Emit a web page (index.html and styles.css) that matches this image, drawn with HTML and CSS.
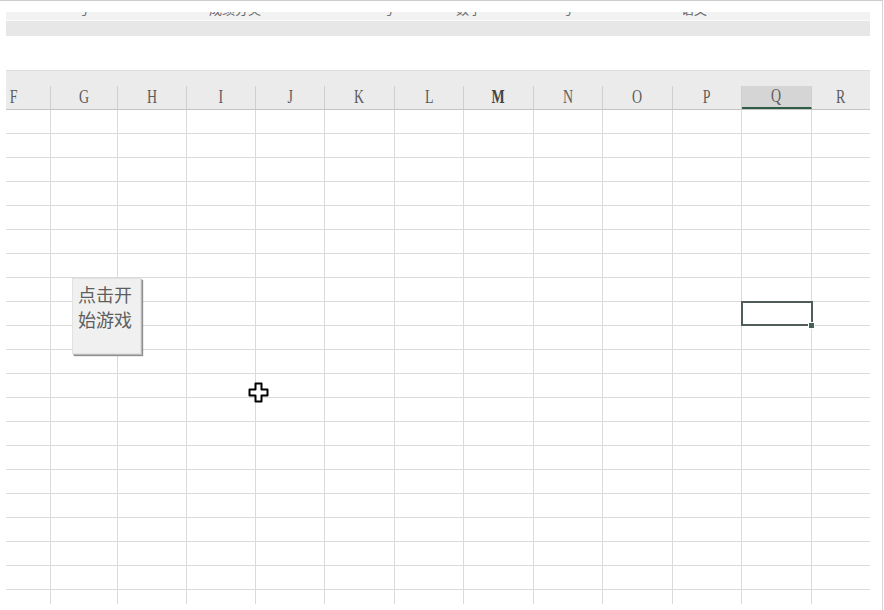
FILE: index.html
```html
<!DOCTYPE html>
<html lang="zh">
<head>
<meta charset="utf-8">
<title>Sheet</title>
<link rel="stylesheet" href="styles.css">
</head>
<body>
<div class="frame">
  <div class="topband">
    <div class="cutrow">
      <span class="cut c1">号</span>
      <span class="cut c2">成绩分类</span>
      <span class="cut c3">号</span>
      <span class="cut c4">数学</span>
      <span class="cut c5">号</span>
      <span class="cut c6">语文</span>
    </div>
    <div class="toolbar"></div>
  </div>
  <div class="sheet">
    <div class="colhead">
      <div class="hrow">
        <div class="hc f"><span>F</span></div><div class="hc"><span>G</span></div><div class="hc"><span>H</span></div><div class="hc"><span>I</span></div><div class="hc"><span>J</span></div><div class="hc"><span>K</span></div><div class="hc"><span>L</span></div><div class="hc"><span class="b">M</span></div><div class="hc"><span>N</span></div><div class="hc"><span>O</span></div><div class="hc"><span>P</span></div><div class="hc sel"><span>Q</span></div><div class="hc last"><span>R</span></div>
      </div>
    </div>
    <div class="body" id="body"></div>
  </div>
  <div class="btn">点击开<br>始游戏</div>
  <svg class="cursor" width="21" height="21" viewBox="0 0 21 21">
    <path d="M7.5 1.5h6v6h6v6h-6v6h-6v-6h-6v-6h6z" fill="#fff" stroke="#000" stroke-width="2" stroke-linejoin="round"/>
  </svg>
</div>
<script src="app.js"></script>
</body>
</html>
```
FILE: app.js
```js
const body = document.getElementById('body');
for (let r = 0; r < 21; r++) {
  const row = document.createElement('div');
  row.className = 'row';
  for (let c = 0; c < 13; c++) {
    const cell = document.createElement('div');
    cell.className = 'cell' + (c === 12 ? ' last' : '');
    if (r === 8 && c === 11) {
      cell.className += ' active';
      const h = document.createElement('span');
      h.className = 'handle';
      cell.appendChild(h);
    }
    row.appendChild(cell);
  }
  body.appendChild(row);
}
```
FILE: styles.css
```css
html, body {
  margin: 0;
  padding: 0;
  background: #fff;
}
body {
  font-family: "Liberation Sans", "Noto Sans CJK SC", sans-serif;
  width: 884px;
  height: 610px;
  overflow: hidden;
  position: relative;
}
.frame {
  box-sizing: border-box;
  width: 883px;
  height: 610px;
  border-top: 1px solid #cdcdcd;
  border-right: 1px solid #d4d4d4;
  padding-left: 6px;
  padding-top: 11px;
}
.topband {
  width: 864px;
}
.cutrow {
  position: relative;
  height: 8px;
  background: #f2f2f2;
  overflow: hidden;
  display: flex;
  border-bottom: 1px solid #fafafa;
}
.cut {
  font-family: "Noto Sans CJK SC", sans-serif;
  font-size: 13px;
  line-height: 13px;
  color: #666;
  margin-top: -10px;
  white-space: nowrap;
}
.c1 { margin-left: 70px; }
.c2 { margin-left: 120px; }
.c3 { margin-left: 120px; }
.c4 { margin-left: 62px; }
.c5 { margin-left: 78px; }
.c6 { margin-left: 108px; }
.toolbar {
  height: 15px;
  background: #e7e7e7;
}
.sheet {
  width: 864px;
  margin-top: 34px;
}
.colhead {
  height: 40px;
  box-sizing: border-box;
  background: #ebebeb;
  border-top: 1px solid #dddddd;
  border-bottom: 1px solid #c4c4c4;
  padding-top: 15px;
}
.hrow, .row {
  display: grid;
  grid-template-columns: 45px 67px 69px 69px 69px 70px 69px 70px 69px 70px 69px 70px 58px;
}
.hc {
  box-sizing: border-box;
  height: 23px;
  border-right: 1px solid #cfcfcf;
  font-family: "Liberation Serif", "DejaVu Serif", serif;
  font-size: 17px;
  line-height: 23px;
  color: #5c5c5c;
  text-align: center;
}
.hc span {
  display: inline-block;
  transform: scale(0.82, 1.05);
}
.hc span.b {
  font-weight: bold;
  color: #444;
}
.hc.f {
  text-align: left;
  padding-left: 3px;
}
.hc.last {
  border-right: none;
}
.hc.sel {
  background: #d5d5d5;
  border-bottom: 2px solid #2f5d48;
  line-height: 21px;
}
.body {
  height: 494px;
  overflow: hidden;
}
.row {
  height: 24px;
}
.cell {
  box-sizing: border-box;
  height: 24px;
  border-right: 1px solid #dadada;
  border-bottom: 1px solid #dadada;
  position: relative;
}
.cell.last {
  border-right: none;
}
.cell.active::after {
  content: "";
  position: absolute;
  left: -1px;
  top: -1px;
  right: -2px;
  bottom: -1px;
  border: 2px solid #4f5c57;
}
.handle {
  position: absolute;
  right: -4px;
  bottom: -4px;
  width: 5px;
  height: 5px;
  background: #46605a;
  border: 1px solid #fff;
  z-index: 2;
}
.btn {
  position: absolute;
  left: 72px;
  top: 278px;
  width: 69px;
  height: 76px;
  box-sizing: border-box;
  background: #f0f0f0;
  border: 1px solid #e2e2e2;
  box-shadow: 1px 1px 0 #b8b8b8, 2px 2px 1px #8e8e8e;
  padding: 3px 0 0 5px;
  font-family: "Noto Sans CJK SC", sans-serif;
  font-size: 18px;
  line-height: 25px;
  color: #5e5e5e;
}
.cursor {
  position: absolute;
  left: 248px;
  top: 382px;
}
```
